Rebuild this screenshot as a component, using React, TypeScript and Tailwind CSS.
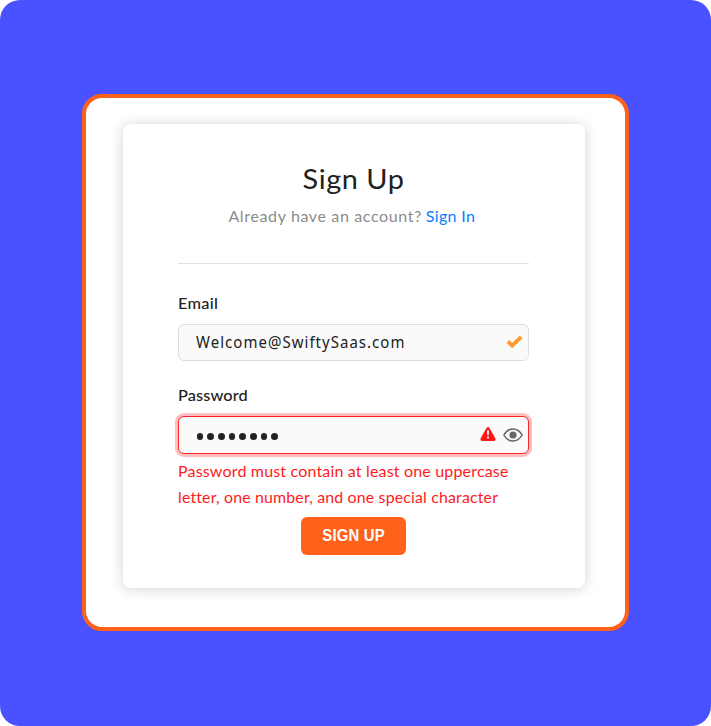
function CheckMark() {
  return (
    <svg className="mb-[2px]" width="17" height="14" viewBox="0 0 17 14" fill="none" aria-hidden="true">
      <path d="M1.9 6.4L6.1 10.6L15.2 2" stroke="#ff9a30" strokeWidth="3.8" />
    </svg>
  );
}

function Warning() {
  return (
    <svg className="mb-[3px]" width="16" height="14" viewBox="0 0 16 14" aria-hidden="true">
      <path d="M6.5 1.1Q8 -0.9 9.5 1.1L15.3 11.3Q16 13.7 13.8 14H2.2Q0 13.7 .7 11.3Z" fill="#ff1616" />
      <path d="M7 3.5H9L8.7 8.3H7.3Z" fill="#fff" />
      <circle cx="8" cy="10.5" r="1.1" fill="#fff" />
    </svg>
  );
}

function Eye() {
  return (
    <svg className="mb-[1px]" width="20" height="14" viewBox="0 0 20 14" fill="none" aria-hidden="true">
      <path d="M.9 7C3.2 2.9 6.3 .9 10 .9S16.8 2.9 19.1 7C16.8 11.1 13.7 13.1 10 13.1S3.2 11.1 .9 7Z" stroke="#666" strokeWidth="1.5" />
      <circle cx="10" cy="7" r="3.6" fill="#666" />
    </svg>
  );
}

export default function App() {
  return (
    <div className="h-[726px] w-[711px] overflow-hidden bg-white font-['Lato',sans-serif] text-[#212121]">
      <div className="h-full rounded-[20px] bg-[#4a52ff] pt-[94px] pl-[82px]">
        <div className="h-[537px] w-[547px] rounded-[20px] border-4 border-[#ff611a] bg-white pt-[26px] pl-[37px]">
          <main className="flex h-[464px] w-[462px] flex-col rounded-lg bg-white pt-[39px] pr-[56px] pl-[55px] shadow-[0_1px_14px_rgba(0,0,0,0.18)]">
            <h1 className="h-8 scale-x-[1.11] text-center text-[26px] leading-8 tracking-[0.5px] whitespace-nowrap">Sign Up</h1>
            <p className="mt-[10px] h-[22px] scale-x-[1.066] pr-[3px] text-center text-[15px] leading-[22px] tracking-[0.6px] whitespace-nowrap text-[#8b8b8b]">
              Already have an account?<a className="ml-[3.5px] tracking-[0.35px] text-[#087bff]">Sign In</a>
            </p>
            <hr className="mt-9 border-t border-[#e2e2e2]" />
            <label className="mt-[28px] h-[22px] origin-left scale-x-[1.09] text-[15px] leading-[22px] font-medium tracking-[0.25px]">Email</label>
            <div className="mt-[10px] flex h-[37px] items-center justify-between rounded-md border border-[#dedede] bg-[#fafafa] pr-[5px] pl-[16.5px]">
              <span className="mb-[2px] origin-left scale-x-[0.937] font-['Noto_Sans',sans-serif] text-[16px] leading-6 tracking-[1.1px]">Welcome@SwiftySaas.com</span>
              <CheckMark />
            </div>
            <label className="mt-[23px] h-[22px] origin-left scale-x-[1.09] text-[15px] leading-[22px] font-medium tracking-[0.1px]">Password</label>
            <div className="mt-[10px] flex h-[38px] items-center rounded-md border border-[#ff2528] bg-[#fafafa] pr-[5.5px] pl-[17.5px] shadow-[0_0_0_3px_#ffbfc0]">
              <div className="flex gap-[4px] pt-[3.5px]" aria-label="Password">
                {Array.from({ length: 8 }, (_, i) => (
                  <span key={i} className="size-[6.7px] rounded-full bg-[#222]" />
                ))}
              </div>
              <div className="ml-auto flex items-center gap-[7px]">
                <Warning />
                <Eye />
              </div>
            </div>
            <p className="mt-[4px] text-[15px] leading-[26px] whitespace-nowrap text-[#ff1b20]">
              <span className="block origin-left scale-x-[1.067] tracking-[0.16px]">Password must contain at least one uppercase</span>
              <span className="block origin-left scale-x-[1.059] tracking-[0.16px]">letter, one number, and one special character</span>
            </p>
            <button className="mt-[7px] h-[38px] w-[105px] self-center rounded-md bg-[#ff611a] pb-[1px] font-['Liberation_Sans',sans-serif] text-[16px] leading-5 font-bold text-white">
              <span className="inline-block scale-x-[0.93] tracking-[0.2px] whitespace-nowrap">SIGN UP</span>
            </button>
          </main>
        </div>
      </div>
    </div>
  );
}
